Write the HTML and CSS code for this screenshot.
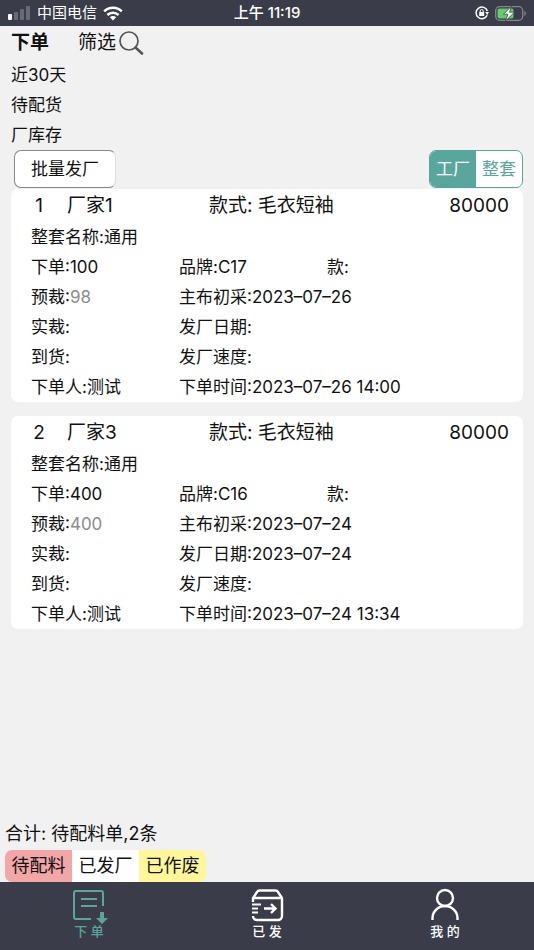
FILE: index.html
```
<!DOCTYPE html>
<html lang="zh-CN">
  <head>
    <meta charset="UTF-8" />
    <meta name="viewport" content="width=device-width, initial-scale=1.0" />
    <title>下单</title>
    <link rel="stylesheet" href="styles.css">
  </head>
  <body>
    <div class="status-bar">
      <div class="carrier">
        <svg width="23" height="14" viewBox="0 0 23 14">
          <rect x="0" y="8" width="4" height="6" rx="1" fill="#fff" />
          <rect x="6" y="6" width="4" height="8" rx="1" fill="#686b75" />
          <rect x="12" y="3" width="4" height="11" rx="1" fill="#686b75" />
          <rect x="18" y="0" width="4" height="14" rx="1" fill="#686b75" />
        </svg>
        <span>中国电信</span>
        <svg width="20" height="15" viewBox="0 0 20 15">
          <g fill="none" stroke="#fff" stroke-width="2.6">
            <path d="M1.2 5.4a12.6 12.6 0 0 1 17.6 0" />
            <path d="M4.4 9a8 8 0 0 1 11.2 0" />
          </g>
          <path d="M10 14.6l-3.2-3.3a4.6 4.6 0 0 1 6.4 0z" fill="#fff" />
        </svg>
      </div>
      <div class="clock">上午 11:19</div>
      <div class="power">
        <svg width="14" height="14" viewBox="0 0 14 14">
          <path d="M12.2 9.2A5.8 5.8 0 1 1 12.4 5" fill="none" stroke="#fff" stroke-width="1.5" />
          <path d="M10.3 6h3.7l-1.8 2.9z" fill="#fff" />
          <rect x="4.2" y="6" width="5" height="4" rx="0.5" fill="#fff" />
          <path d="M5.2 6.3V5a1.5 1.5 0 0 1 3 0v1.3" fill="none" stroke="#fff" />
        </svg>
        <svg width="31" height="15" viewBox="0 0 31 15">
          <rect x="0.7" y="0.7" width="27" height="13.6" rx="4" fill="none" stroke="#85878e" stroke-width="1.3" />
          <path d="M29.3 5v5c2-.6 2-4.4 0-5z" fill="#85878e" />
          <rect x="2.5" y="2.5" width="16" height="10" rx="2" fill="#5fd065" />
          <path d="M16.500 0L8.500 8.300h4.300L10.500 15l9-8.800h-5z" fill="#fff" stroke="#3a3d49" stroke-width="0.8" />
        </svg>
      </div>
    </div>

    <main class="page">
      <header class="page-header">
        <h1>下单</h1>
        <button class="filter-btn" type="button">
          筛选
          <svg width="26" height="26" viewBox="0 0 26 26" fill="none" stroke="#555">
            <circle cx="11" cy="11" r="9" stroke-width="1.7" />
            <path d="M17.5 17.5l6.5 6" stroke-width="2.6" stroke-linecap="round" />
          </svg>
        </button>
      </header>
      <ul class="filters">
        <li>近30天</li>
        <li>待配货</li>
        <li>厂库存</li>
      </ul>

      <div class="toolbar">
        <button class="batch-btn" type="button">批量发厂</button>
        <div class="switch">
          <button class="active" type="button">工厂</button>
          <button type="button">整套</button>
        </div>
      </div>

      <section class="orders">
        <article class="card">
          <h2 class="card-title">
            <span class="index">1</span>
            <span>厂家1</span>
            <span>款式: 毛衣短袖</span>
            <span class="amount">80000</span>
          </h2>
          <div class="fields">
            <div class="full">整套名称:通用</div>
            <div>下单:100</div>
            <div>品牌:C17</div>
            <div>款:</div>
            <div>预裁:<span class="muted">98</span></div>
            <div class="wide">主布初采:2023–07–26</div>
            <div>实裁:</div>
            <div class="wide">发厂日期:</div>
            <div>到货:</div>
            <div class="wide">发厂速度:</div>
            <div>下单人:测试</div>
            <div class="wide">下单时间:2023–07–26 14:00</div>
          </div>
        </article>

        <article class="card">
          <h2 class="card-title">
            <span class="index">2</span>
            <span>厂家3</span>
            <span>款式: 毛衣短袖</span>
            <span class="amount">80000</span>
          </h2>
          <div class="fields">
            <div class="full">整套名称:通用</div>
            <div>下单:400</div>
            <div>品牌:C16</div>
            <div>款:</div>
            <div>预裁:<span class="muted">400</span></div>
            <div class="wide">主布初采:2023–07–24</div>
            <div>实裁:</div>
            <div class="wide">发厂日期:2023–07–24</div>
            <div>到货:</div>
            <div class="wide">发厂速度:</div>
            <div>下单人:测试</div>
            <div class="wide">下单时间:2023–07–24 13:34</div>
          </div>
        </article>
      </section>
    </main>

    <div class="summary">
      <p>合计: 待配料单,2条</p>
      <div class="states">
        <button class="pending" type="button">待配料</button>
        <button class="sent" type="button">已发厂</button>
        <button class="void" type="button">已作废</button>
      </div>
    </div>

    <nav class="tab-bar">
      <a class="current" href="#order">
        <svg width="36" height="36" viewBox="0 0 36 36" fill="none" stroke="currentColor" stroke-width="2">
          <path d="M20 31H5a2 2 0 0 1-2-2V5a2 2 0 0 1 2-2h25a2 2 0 0 1 2 2v13" />
          <path d="M10 11h16M10 18h16" />
          <path d="M30 24h4v6h4l-6 6-6-6h4z" fill="currentColor" stroke="none" transform="translate(-1 0)" />
        </svg>
        <span>下 单</span>
      </a>
      <a href="#sent">
        <svg width="36" height="36" viewBox="0 0 36 36" fill="none" stroke="currentColor" stroke-width="2.4">
          <path d="M4 14V10l4-6a3 3 0 0 1 2.5-1.500h16A3 3 0 0 1 29 4l4 6v18a4 4 0 0 1-4 4H8a4 4 0 0 1-4-4M4 10h29" />
          <path d="M3 16.500h9M3 20.500h6M3 24.500h6" stroke-width="2" />
          <path d="M15 20.500h11.500M22 16l4.500 4.500-4.500 4.500" />
        </svg>
        <span>已 发</span>
      </a>
      <a href="#mine">
        <svg width="36" height="36" viewBox="0 0 36 36" fill="none" stroke="currentColor" stroke-width="2.4">
          <circle cx="18" cy="10" r="8" />
          <path d="M5.5 32v-2a12.500 12 0 0 1 25 0v2" />
        </svg>
        <span>我 的</span>
      </a>
    </nav>
  </body>
</html>
```
FILE: styles.css
```
* {
  box-sizing: border-box;
}

body {
  margin: 0;
  min-height: 100vh;
  display: flex;
  flex-direction: column;
  background-color: #f1f1f1;
  color: #111;
  font-family: Inter, "Noto Sans CJK SC", sans-serif;
  font-size: 17px;
  line-height: 30px;
}

button {
  margin: 0;
  padding: 0;
  border: none;
  background: none;
  color: inherit;
  font: inherit;
  cursor: pointer;
}

svg {
  display: block;
  flex: none;
}

/* status bar */
.status-bar {
  display: grid;
  grid-template-columns: 1fr auto 1fr;
  align-items: center;
  height: 26px;
  padding: 0 8px;
  background-color: #3a3d49;
  color: #fff;
  font-size: 15px;
  line-height: 26px;
}

.carrier,
.power {
  display: flex;
  align-items: center;
  gap: 6px;
}

.clock {
  font-weight: 500;
}

.power {
  justify-content: flex-end;
}

/* page */
.page {
  flex: 1;
  padding: 0 11px 14px;
}

.page-header {
  display: flex;
  align-items: center;
  gap: 29px;
  height: 34px;
  font-size: 19px;
}

.page-header h1 {
  margin: 0;
  font-size: 19px;
  font-weight: 700;
}

.filter-btn {
  display: flex;
  align-items: center;
  gap: 2px;
}

.filters {
  margin: 0;
  padding: 0;
  list-style: none;
}

.toolbar {
  display: flex;
  justify-content: space-between;
  height: 39px;
  padding: 0 0 1px 3px;
}

.batch-btn {
  padding: 0 16px;
  border: 1px solid #888;
  border-right-color: #ddd;
  border-radius: 7px;
  background-color: #fff;
}

.switch {
  display: flex;
  border: 1px solid #59a69c;
  border-radius: 7px;
  background-color: #fff;
  overflow: hidden;
}

.switch button {
  width: 46px;
  color: #59a69c;
}

.switch .active {
  background-color: #59a69c;
  color: #fff;
}

/* order cards */
.orders {
  display: flex;
  flex-direction: column;
  gap: 14px;
}

.card {
  border-radius: 7px;
  background-color: #fff;
}

.card-title {
  display: grid;
  grid-template-columns: 56px 142px 1fr auto;
  margin: 0;
  padding-right: 14px;
  font-size: 19px;
  font-weight: 400;
  line-height: 33px;
}

.index {
  text-align: center;
}

.fields {
  display: grid;
  grid-template-columns: repeat(3, 1fr);
  padding: 0 48px 0 20px;
}

.wide {
  grid-column: span 2;
}

.full {
  grid-column: span 3;
}

.muted {
  color: #8c8c8c;
}

/* totals and states */
.summary {
  padding: 0 5px;
  font-size: 18px;
}

.summary p {
  margin: 0;
  line-height: 32px;
}

.states {
  display: flex;
}

.states button {
  width: 67px;
  height: 32px;
}

.states .pending {
  border-radius: 7px 0 0 7px;
  background-color: #f3a6a8;
}

.states .sent {
  background-color: #fff;
}

.states .void {
  border-radius: 0 7px 7px 0;
  background-color: #fff69a;
}

/* bottom tabs */
.tab-bar {
  display: grid;
  grid-template-columns: repeat(3, 1fr);
  height: 68px;
  background-color: #3a3d49;
}

.tab-bar svg {
  overflow: visible;
}

.tab-bar a {
  display: flex;
  flex-direction: column;
  align-items: center;
  padding-top: 6px;
  color: #fff;
  font-size: 13px;
  font-weight: 500;
  line-height: 14px;
  text-decoration: none;
}

.tab-bar .current {
  color: #59a69c;
}
```
